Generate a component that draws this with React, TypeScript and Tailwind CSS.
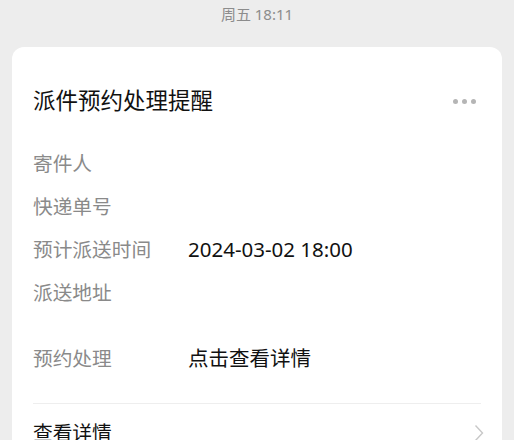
import React from 'react';

const rows: { label: string; value?: string }[] = [
  { label: '寄件人' },
  { label: '快递单号' },
  { label: '预计派送时间', value: '2024-03-02 18:00' },
  { label: '派送地址' },
];

const Row = ({ label, value }: { label: string; value?: string }) => (
  <div className="flex h-[43px] items-center">
    <span className="w-[155px] shrink-0 text-[#8a8a8a]">{label}</span>
    {value && <span className="text-[20.5px] text-[#111]">{value}</span>}
  </div>
);

export default function App() {
  return (
    <div
      className="min-h-[440px] overflow-hidden bg-[#ededed] text-[19.7px]"
      style={{ fontFamily: '"Noto Sans", "Noto Sans CJK SC", sans-serif' }}
    >
      <div className="h-[47px] pt-[3px] text-center text-[15px] leading-[22px] text-[#8c8c8c]">
        周五 18:11
      </div>
      <div className="mx-3 rounded-xl bg-white px-[21px] pb-4">
        <div className="flex items-center justify-between pt-[40px]">
          <h1 className="text-[22.5px] leading-[28px] text-[#111]">派件预约处理提醒</h1>
          <div className="flex gap-[4px] pr-[5px]">
            <span className="h-[5px] w-[5px] rounded-full bg-[#b5b5b5]" />
            <span className="h-[5px] w-[5px] rounded-full bg-[#b5b5b5]" />
            <span className="h-[5px] w-[5px] rounded-full bg-[#b5b5b5]" />
          </div>
        </div>
        <div className="mt-[27px]">
          {rows.map((r) => (
            <Row key={r.label} label={r.label} value={r.value} />
          ))}
        </div>
        <div className="mt-[23px]">
          <Row label="预约处理" value="点击查看详情" />
        </div>
        <div className="mt-[23px] border-t border-[#eeeeee]" />
        <div className="flex h-[58px] items-center justify-between">
          <span className="text-[#111]">查看详情</span>
          <svg width="10" height="18" viewBox="0 0 10 18" fill="none" className="-mr-[3px]">
            <path d="M1.5 1.5 8.5 9l-7 7.5" stroke="#c8c8c8" strokeWidth="1.4" />
          </svg>
        </div>
      </div>
    </div>
  );
}
